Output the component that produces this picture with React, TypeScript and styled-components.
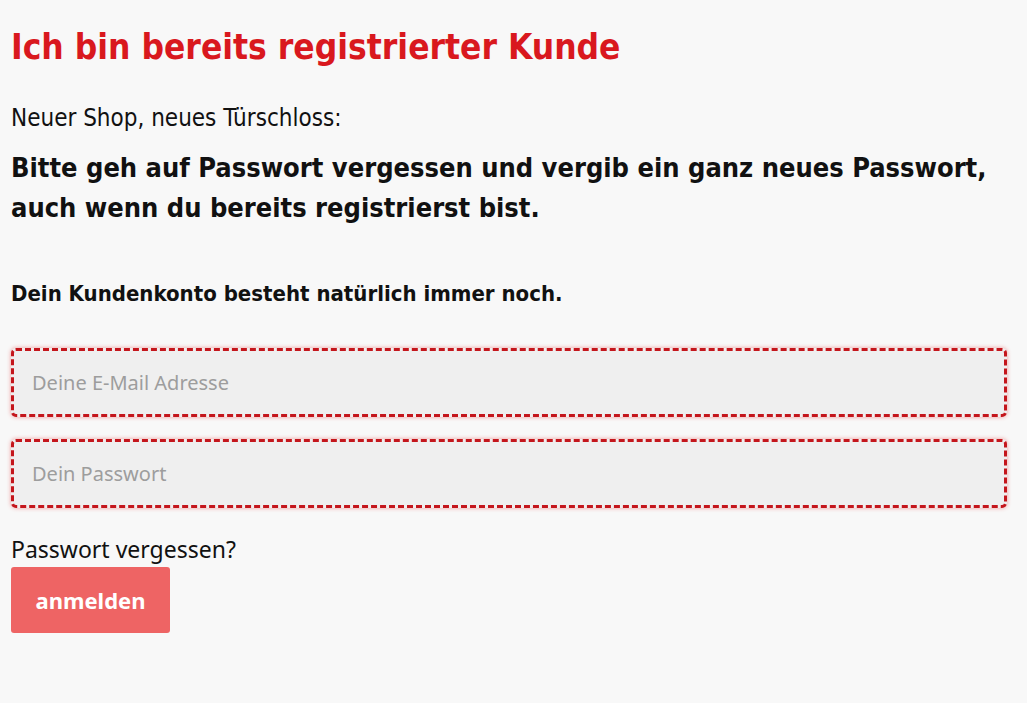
import styled, { createGlobalStyle } from 'styled-components'

const GlobalStyle = createGlobalStyle`
  html, body {
    margin: 0;
    padding: 0;
    background: #f8f8f8;
  }
  body {
    font-family: 'DejaVu Sans Condensed', 'Liberation Sans', sans-serif;
    color: #111;
  }
`

const Page = styled.div`
  padding: 22px 20px 40px 11px;
  max-width: 996px;
`

const Title = styled.h1`
  margin: 0 0 32px;
  font-size: 35px;
  line-height: 50px;
  font-weight: 700;
  color: #d9181e;
`

const Intro = styled.p`
  margin: 0 0 16px;
  font-size: 24px;
  line-height: 28px;
`

const Notice = styled.h2`
  margin: 0 0 52px;
  font-size: 27px;
  line-height: 40px;
  font-weight: 700;
`

const Note = styled.h3`
  margin: 0 0 40px;
  font-size: 22px;
  line-height: 28px;
  font-weight: 700;
`

const Form = styled.form`
  display: flex;
  flex-direction: column;
`

const Field = styled.input`
  box-sizing: border-box;
  width: 100%;
  height: 69px;
  margin-bottom: 22px;
  padding: 0 18px;
  background: #efefef;
  border: 3px dashed #c4161c;
  border-radius: 5px;
  box-shadow: 0 0 4px rgba(230, 40, 40, 0.45);
  font-family: 'Noto Sans', 'Liberation Sans', sans-serif;
  font-size: 20px;
  color: #333;
  outline: none;

  &::placeholder {
    color: #9d9d9d;
  }
`

const Forgot = styled.a`
  margin-top: 5px;
  font-family: 'Noto Sans', 'Liberation Sans', sans-serif;
  font-size: 23px;
  line-height: 28px;
  color: #111;
  text-decoration: none;
`

const Submit = styled.button`
  align-self: flex-start;
  width: 159px;
  height: 66px;
  margin-top: 4px;
  border: none;
  border-radius: 3px;
  background: #ee6464;
  color: #fff;
  font-family: 'Noto Sans', 'Liberation Sans', sans-serif;
  font-size: 22px;
  font-weight: 700;
  cursor: pointer;
`

export default function App() {
  return (
    <>
      <GlobalStyle />
      <Page>
        <Title>Ich bin bereits registrierter Kunde</Title>
        <Intro>Neuer Shop, neues Türschloss:</Intro>
        <Notice>
          Bitte geh auf Passwort vergessen und vergib ein ganz neues Passwort,
          <br />
          auch wenn du bereits registrierst bist.
        </Notice>
        <Note>Dein Kundenkonto besteht natürlich immer noch.</Note>
        <Form onSubmit={(e) => e.preventDefault()}>
          <Field type="email" placeholder="Deine E-Mail Adresse" />
          <Field type="password" placeholder="Dein Passwort" />
          <Forgot href="#">Passwort vergessen?</Forgot>
          <Submit type="submit">anmelden</Submit>
        </Form>
      </Page>
    </>
  )
}
